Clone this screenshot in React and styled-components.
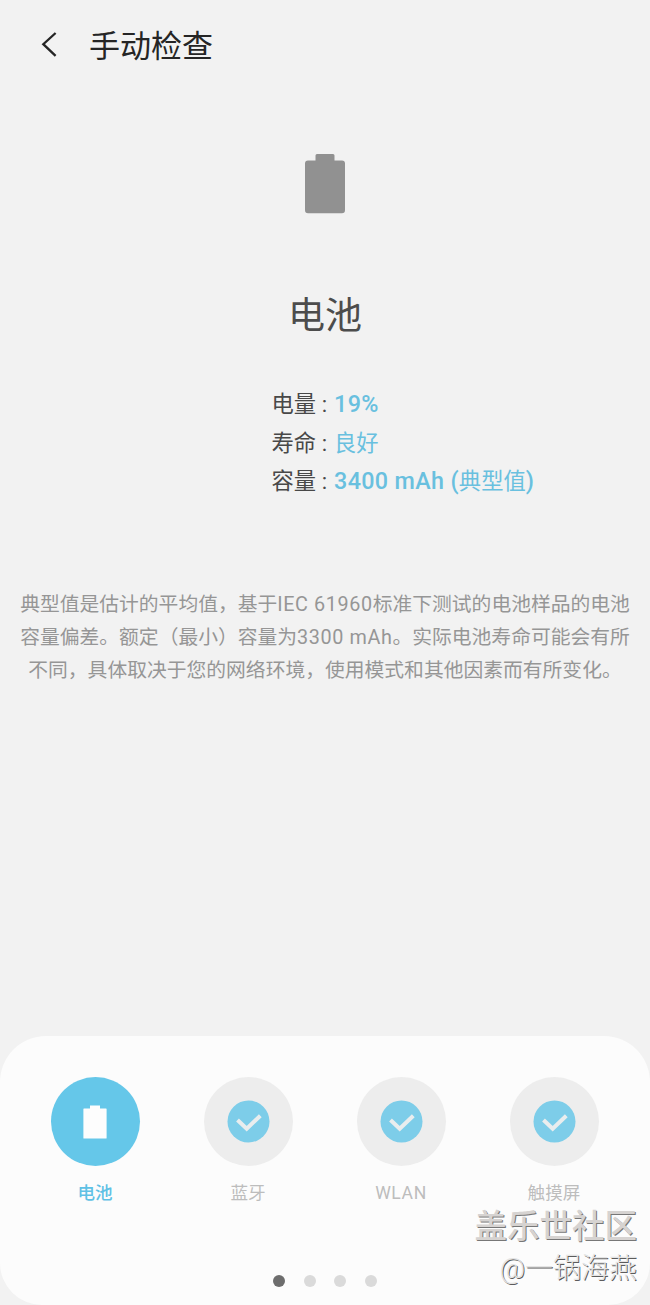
import React from 'react';
import styled, { createGlobalStyle } from 'styled-components';

const GlobalStyle = createGlobalStyle`
  body {
    margin: 0;
    background: #f2f2f2;
    font-family: Roboto, 'Noto Sans CJK SC', sans-serif;
  }
`;

const Screen = styled.div`
  position: relative;
  display: flex;
  flex-direction: column;
  width: 650px;
  height: 1305px;
  overflow: hidden;
  background: #f2f2f2;
`;

const Header = styled.header`
  display: flex;
  align-items: center;
  height: 90px;
  padding-left: 40px;
`;

const BackButton = styled.button`
  display: flex;
  width: 49px;
  padding: 0;
  border: 0;
  background: none;
`;

const Title = styled.h1`
  margin: 4px 0 0;
  color: #252525;
  font-size: 31px;
  font-weight: 400;
  line-height: 46px;
`;

const Main = styled.main`
  display: flex;
  flex: 1;
  flex-direction: column;
  align-items: center;
  padding-top: 64px;
`;

const Heading = styled.h2`
  margin: 75px 0 0;
  color: #4c4c4c;
  font-size: 37px;
  font-weight: 400;
  line-height: 56px;
`;

const Stats = styled.dl`
  display: grid;
  width: 650px;
  margin: 40px 0 0;
  padding-left: 271.5px;
  box-sizing: border-box;
  grid-auto-rows: 38.5px;
`;

const Stat = styled.div`
  display: flex;
  gap: 7px;
  font-size: 22.3px;
  line-height: 38px;
  white-space: nowrap;
`;

const StatName = styled.dt`
  color: #484848;
`;

const StatValue = styled.dd`
  margin: 0;
  color: #69c0df;
  font-size: 23.3px;
  font-weight: 500;
  letter-spacing: .35px;
`;

const Regular = styled.span`
  font-size: 22.3px;
  font-weight: 400;
  letter-spacing: 0;
`;

const Note = styled.p`
  margin: 87px 0 0;
  color: #969696;
  font-size: 19.8px;
  line-height: 33px;
  text-align: center;
  white-space: nowrap;
`;

const NoteLine = styled.span`
  display: block;
`;

const Latin = styled.span`
  letter-spacing: .6px;
`;

const Panel = styled.footer`
  display: flex;
  flex-direction: column;
  justify-content: space-between;
  height: 269px;
  padding: 41px 19px 18px 18.5px;
  border-radius: 46px 46px 42px 42px;
  box-sizing: border-box;
  background: #fcfcfc;
`;

const Checks = styled.nav`
  display: grid;
  grid-template-columns: repeat(4, 153px);
`;

const Check = styled.div`
  display: flex;
  flex-direction: column;
  align-items: center;
  gap: 14px;
`;

const Disc = styled.div`
  display: flex;
  align-items: center;
  justify-content: center;
  width: 89px;
  height: 89px;
  border-radius: 50%;
  background: ${({ $active }) => ($active ? '#65c7e9' : '#ededed')};
`;

const CheckLabel = styled.span`
  color: ${({ $active }) => ($active ? '#5fc1e5' : '#bdbdbd')};
  font-size: 17.6px;
  font-weight: ${({ $active }) => ($active ? 500 : 400)};
  line-height: 26px;
`;

const Dots = styled.div`
  display: flex;
  justify-content: center;
  gap: 18.5px;
`;

const Dot = styled.span`
  width: 12px;
  height: 12px;
  border-radius: 50%;
  background: ${({ $active }) => ($active ? '#6d6d6d' : '#dadada')};
`;

const Watermark = styled.div`
  position: absolute;
  right: 13px;
  bottom: 15px;
  color: #d6d3d1;
  text-align: right;
  white-space: nowrap;
`;

const Community = styled.div`
  font-size: 32.5px;
  font-weight: 500;
  line-height: 42px;
  text-shadow: 1px 1px 0 #777;
`;

const Author = styled.div`
  color: #e4e4e4;
  font-size: 28px;
  font-weight: 300;
  line-height: 42px;
  text-shadow: 1px 1px 0 #5c5c5c;
`;

const BackIcon = () => (
  <svg width="18" height="26" viewBox="0 0 18 26" fill="none">
    <path d="M15.600 1 3.300 12.200l12.300 11.700" stroke="#252525" strokeWidth="2.300" />
  </svg>
);

const BatteryIcon = () => (
  <svg width="42" height="60" viewBox="0 0 42 60" fill="#919191">
    <path d="M13 0h16q1.500 0 1.500 1.500v5H38q3 0 3 3V56q0 3.300-3 3.300H4q-3 0-3-3.300V9.500q0-3 3-3h7.500v-5Q11.500 0 13 0z" />
  </svg>
);

const SmallBatteryIcon = () => (
  <svg width="24" height="34" viewBox="0 0 24 34" fill="#fdfdfd">
    <path d="M7 .5h10v3h6q.6 0 .6.6v28.800q0 .6-.6.6H1q-.6 0-.6-.6V4.100q0-.6.6-.6h6z" />
  </svg>
);

const DoneIcon = () => (
  <svg width="43" height="43" viewBox="0 0 43 43" fill="none">
    <circle cx="21.500" cy="21.500" r="21" fill="#7dcde9" />
    <path d="m10.500 20 9.200 8.800L33.300 15.700" stroke="#e9edee" strokeWidth="4" />
  </svg>
);

const stats = [
  { name: '电量', value: '19%' },
  { name: '寿命', value: <Regular>良好</Regular> },
  { name: '容量', value: <>3400 mAh (<Regular>典型值</Regular>)</> },
];

const checks = ['电池', '蓝牙', 'WLAN', '触摸屏'];

const App = () => (
  <>
    <GlobalStyle />
    <Screen lang="zh-CN">
      <Header>
        <BackButton aria-label="返回"><BackIcon /></BackButton>
        <Title>手动检查</Title>
      </Header>
      <Main>
        <BatteryIcon />
        <Heading>电池</Heading>
        <Stats>
          {stats.map(({ name, value }) => (
            <Stat key={name}>
              <StatName>{name} :</StatName>
              <StatValue>{value}</StatValue>
            </Stat>
          ))}
        </Stats>
        <Note>
          <NoteLine>典型值是估计的平均值，基于<Latin>IEC 61960</Latin>标准下测试的电池样品的电池</NoteLine>
          <NoteLine>容量偏差。额定（最小）容量为<Latin>3300 mAh</Latin>。实际电池寿命可能会有所</NoteLine>
          <NoteLine>不同，具体取决于您的网络环境，使用模式和其他因素而有所变化。</NoteLine>
        </Note>
      </Main>
      <Panel>
        <Checks>
          {checks.map((label, i) => (
            <Check key={label}>
              <Disc $active={i === 0}>
                {i === 0 ? <SmallBatteryIcon /> : <DoneIcon />}
              </Disc>
              <CheckLabel $active={i === 0}>
                {label === 'WLAN' ? <Latin>{label}</Latin> : label}
              </CheckLabel>
            </Check>
          ))}
        </Checks>
        <Dots>
          {checks.map((label, i) => <Dot key={label} $active={i === 0} />)}
        </Dots>
      </Panel>
      <Watermark>
        <Community>盖乐世社区</Community>
        <Author>@一锅海燕</Author>
      </Watermark>
    </Screen>
  </>
);

export default App;
